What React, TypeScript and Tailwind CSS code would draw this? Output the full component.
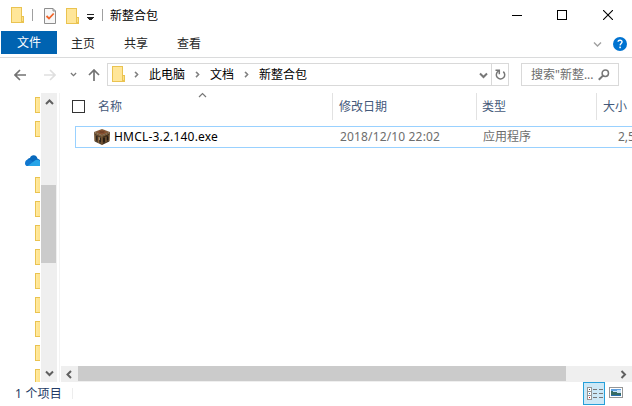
import type { ReactNode } from "react";

function Folder({ className = "" }: { className?: string }) {
  return (
    <svg width="14" height="16" viewBox="0 0 14 16" className={`shrink-0 ${className}`} shapeRendering="crispEdges">
      <path d="M0.5 0.5H10.5V9.5H12.5V15.5H0.5Z" fill="#ffe699" stroke="#eac350" />
      <path d="M10.5 9.5H12.5V14.5L10.5 15.5Z" fill="#fbe08a" stroke="#eac350" />
    </svg>
  );
}

function Chevron({ dir, color = "#606060", w = 2, className = "" }: { dir: "up" | "down" | "left" | "right"; color?: string; w?: number; className?: string }) {
  const d = { up: "M1 6L4.5 2.5L8 6", down: "M1 2.5L4.5 6L8 2.5", left: "M6 1L2.5 4.5L6 8", right: "M2.5 1L6 4.5L2.5 8" }[dir];
  return (
    <svg width="9" height="9" viewBox="0 0 9 9" className={`shrink-0 ${className}`}>
      <path d={d} fill="none" stroke={color} strokeWidth={w} />
    </svg>
  );
}

function Arrow({ color, className = "" }: { color: string; className?: string }) {
  return (
    <svg width="12" height="12" viewBox="0 0 12 12" className={`shrink-0 ${className}`}>
      <path d="M12 6H1.2M6 1L1 6L6 11" fill="none" stroke={color} strokeWidth="1.7" />
    </svg>
  );
}

function Crumb({ children, className = "" }: { children: ReactNode; className?: string }) {
  return <span className={`leading-[21px] text-black ${className}`}>{children}</span>;
}

function TitleBar() {
  return (
    <div className="flex h-[31px] shrink-0 items-start pl-[11px]">
      <Folder className="mt-[7px]" />
      <div className="ml-[7px] mt-[9px] h-[12px] w-px bg-[#a0a0a0]" />
      <svg width="12" height="16" viewBox="0 0 12 16" className="ml-[11px] mt-[8px]">
        <path d="M0.5 0.5H9L11.5 3V15.5H0.5Z" fill="#f7f7f7" stroke="#8e8e8e" />
        <path d="M9 0.5V3H11.5" fill="none" stroke="#8e8e8e" />
        <path d="M2.5 8L5 10.5L9.7 5.5" fill="none" stroke="#f0642a" strokeWidth="1.8" />
      </svg>
      <Folder className="ml-[10px] mt-[8px]" />
      <svg width="7" height="6" viewBox="0 0 7 6" className="ml-[7px] mt-[14px]" shapeRendering="crispEdges">
        <path d="M0 0H7V1H0ZM0 3H7V4H6V5H5V6H2V5H1V4H0Z" fill="#222" />
      </svg>
      <div className="ml-[8px] mt-[9px] h-[12px] w-px bg-[#a0a0a0]" />
      <span className="ml-[7px] mt-[6px] leading-[20px] text-black">新整合包</span>
      <div className="ml-auto mr-[19px] flex">
        <div className="mt-[15px] h-px w-[10px] bg-black" />
        <div className="ml-[35px] mt-[10px] size-[10px] border border-black" />
        <svg width="10" height="10" viewBox="0 0 10 10" className="ml-[36px] mt-[10px]">
          <path d="M0 0L10 10M10 0L0 10" stroke="#000" strokeWidth="1.1" />
        </svg>
      </div>
    </div>
  );
}

function RibbonTabs() {
  return (
    <div className="flex h-[27px] shrink-0 border-b border-[#dadbdc] pl-px leading-[25px] text-[#262626]">
      <div className="h-[23px] w-[56px] bg-[#0063b1] pl-[16px] leading-[23px] text-white">文件</div>
      <span className="ml-[14px]">主页</span>
      <span className="ml-[29px]">共享</span>
      <span className="ml-[29px]">查看</span>
      <div className="ml-auto mr-[5px] flex">
        <Chevron dir="down" color="#a0a0a0" w={1.4} className="mt-[9px]" />
        <svg width="14" height="14" viewBox="0 0 14 14" className="ml-[11px] mt-[6px]">
          <circle cx="7" cy="7" r="7" fill="#0073d1" />
          <path d="M5 4.8C5.2 2.6 9.3 2.8 9 5.1C8.8 6.4 7.2 6.6 7.1 8.4" fill="none" stroke="#fff" strokeWidth="1.4" />
          <rect x="6.3" y="9.6" width="1.6" height="1.6" fill="#fff" />
        </svg>
      </div>
    </div>
  );
}

function AddressRow() {
  return (
    <div className="flex h-[35px] shrink-0 pl-[14px] pt-[5px]">
      <Arrow color="#737373" className="mt-[6px]" />
      <Arrow color="#dfdfdf" className="ml-[18px] mt-[6px] rotate-180" />
      <Chevron dir="down" color="#7a7a7a" w={1.8} className="ml-[13px] mt-[7px] scale-75" />
      <Arrow color="#737373" className="ml-[10px] mt-[6px] rotate-90" />
      <div className="ml-[7px] flex h-[23px] w-[402px] border border-[#d9d9d9]">
        <Folder className="ml-[4px] mt-[2px]" />
        <Chevron dir="right" color="#808080" w={2} className="ml-[6px] mt-[6px] scale-75" />
        <Crumb className="ml-[8px]">此电脑</Crumb>
        <Chevron dir="right" color="#808080" w={2} className="ml-[8px] mt-[6px] scale-75" />
        <Crumb className="ml-[8px]">文档</Crumb>
        <Chevron dir="right" color="#808080" w={2} className="ml-[8px] mt-[6px] scale-75" />
        <Crumb className="ml-[8px]">新整合包</Crumb>
        <Chevron dir="down" color="#777" w={2} className="ml-auto mt-[7px]" />
        <div className="ml-[3px] flex w-[17px] border-l border-[#d9d9d9]">
          <svg width="11" height="12" viewBox="0 0 11 12" className="ml-[3px] mt-[5px]">
            <path d="M3.3 2.2A4.2 4.2 0 1 0 8.3 2.6M0.5 1.3H4.3V5.2" fill="none" stroke="#777" strokeWidth="1.5" />
          </svg>
        </div>
      </div>
      <div className="ml-[12px] flex h-[23px] w-[98px] border border-[#d9d9d9]">
        <span className="ml-[9px] whitespace-nowrap leading-[22px] text-[#6d6d6d]">搜索"新整...</span>
        <svg width="12" height="12" viewBox="0 0 12 12" className="ml-auto mr-[8px] mt-[5px]">
          <circle cx="7.3" cy="4.2" r="3.2" fill="none" stroke="#777" strokeWidth="1.5" />
          <path d="M5 6.6L0.8 10.8" stroke="#777" strokeWidth="2" />
        </svg>
      </div>
    </div>
  );
}

function NavFolder() {
  return (
    <div className="ml-[35px] h-[16px] w-[5px] shrink-0 border border-r-0 border-[#eac350] bg-gradient-to-r from-[#ffeaa3] to-[#ffe287]" />
  );
}

function NavPane() {
  return (
    <div className="flex w-[41px] shrink-0 flex-col gap-[8px] overflow-hidden pt-[4px]">
      <NavFolder />
      <NavFolder />
      <div className="flex h-[24px] w-[40px] shrink-0 items-start overflow-hidden pl-[25px] pt-[10px]">
        <svg width="15" height="12" viewBox="0 0 15 12" className="shrink-0">
          <path d="M2 6.5C2 4.5 3.4 3 5 3C5.5 1 7 0.2 8.7 0.3C11 0.4 12 2 12.4 3.5L15 5V9H3Z" fill="#0869bd" />
          <path d="M0 8.4C0 6 1.6 4.5 3.6 4.6C5 4.6 6 5.4 7 6L9 8L5 11H2.5C1 11 0 9.8 0 8.4Z" fill="#1177cf" />
          <path d="M2.7 11L9.5 5.8C11.2 4.4 13.2 4.6 15 5.8V11Z" fill="#27a4e8" />
        </svg>
      </div>
      <NavFolder />
      <NavFolder />
      <NavFolder />
      <NavFolder />
      <NavFolder />
      <NavFolder />
      <NavFolder />
      <NavFolder />
      <NavFolder />
    </div>
  );
}

function CraftingTable() {
  return (
    <svg width="16" height="16" viewBox="0 0 16 16" className="shrink-0">
      <path d="M0 3L8 0L16 3L8 6.5Z" fill="#80603f" />
      <path d="M0 3L8 6.5V16L0.7 12.5Z" fill="#54412d" />
      <path d="M16 3L8 6.5V16L15.3 12.5Z" fill="#43311e" />
      <path d="M2.5 3L8 0.9L13.5 3L8 5.4Z" fill="#8a5030" />
      <path d="M5.5 2.1L10.5 4.1M10.5 2.1L5.5 4.1" stroke="#603a25" strokeWidth="0.6" />
      <path d="M0.2 4L8 7.4L15.8 4" fill="none" stroke="#8c6840" strokeWidth="1" />
      <path d="M1 6V12M4.5 8V13.9M8 8V15.5M12 8V13.5M15 6V12" stroke="#8b663d" strokeWidth="1" />
      <path d="M2.7 7V11.5M6.3 9V13" stroke="#2b2219" strokeWidth="1.2" />
      <path d="M5.5 8.3V11" stroke="#a99d8a" strokeWidth="0.8" />
      <path d="M10 9V13M13.6 7.5V11" stroke="#211912" strokeWidth="1.5" />
    </svg>
  );
}

function FileList() {
  return (
    <div className="flex min-w-0 flex-1 flex-col">
      <div className="flex h-[27px] shrink-0 pl-[11px] leading-[27px] text-[#44597a]">
        <div className="mt-[7px] size-[13px] shrink-0 border border-[#333]" />
        <span className="ml-[13px] w-[100px] shrink-0">名称</span>
        <Chevron dir="up" color="#777" w={1.2} className="-mt-[2px]" />
        <div className="ml-[125px] w-[144px] shrink-0 border-l border-[#e2e2e2] pl-[6px]">修改日期</div>
        <div className="w-[120px] shrink-0 border-l border-[#e2e2e2] pl-[5px]">类型</div>
        <div className="shrink-0 border-l border-[#e2e2e2] pl-[6px]">大小</div>
      </div>
      <div className="ml-[14px] mt-[6px] flex h-[22px] shrink-0 overflow-hidden border border-r-0 border-[#99d1ff] leading-[20px] text-[#6d6d6d]">
        <div className="flex w-[264px] shrink-0 items-center pl-[18px]">
          <CraftingTable />
          <span className="ml-[4px] whitespace-nowrap text-[12px] tracking-[0.2px] text-black">HMCL-3.2.140.exe</span>
        </div>
        <span className="w-[143px] shrink-0 whitespace-nowrap tracking-[0.15px]">2018/12/10 22:02</span>
        <span className="w-[135px] shrink-0">应用程序</span>
        <span className="shrink-0 whitespace-nowrap">2,5</span>
      </div>
      <div className="mt-auto flex h-[16px] shrink-0 bg-[#efefef]">
        <div className="flex w-[17px] items-center pl-[4px]"><Chevron dir="left" /></div>
        <div className="h-[15px] w-[488px] bg-[#cbcbcb]" />
        <div className="ml-auto mr-[4px] flex items-center"><Chevron dir="right" /></div>
      </div>
    </div>
  );
}

function StatusBar() {
  return (
    <div className="flex h-[24px] shrink-0 pl-[15px]">
      <span className="whitespace-nowrap leading-[23px] tracking-[0.2px] text-[#223a64]">1 个项目</span>
      <div className="ml-[10px] mt-[6px] h-[11px] w-px bg-[#ededed]" />
      <div className="ml-auto mr-[9px] flex">
        <div className="flex h-[23px] w-[22px] border border-[#26a0da] bg-[#cce8f6]">
          <svg width="16" height="13" viewBox="0 0 16 13" className="ml-[3px] mt-[4px]" shapeRendering="crispEdges">
            <path d="M0.5 0.5H4.5V12.5H0.5ZM0.5 4.5H4.5M0.5 8.5H4.5" fill="#fff" stroke="#969696" />
            <rect x="2" y="2" width="1" height="1" fill="#444" />
            <rect x="2" y="6" width="1" height="1" fill="#2187c9" />
            <rect x="2" y="10" width="1" height="1" fill="#c22" />
            <path d="M6 2.5H10M12 2.5H16M6 6.5H10M12 6.5H16M6 10.5H10M12 10.5H16" stroke="#777" />
          </svg>
        </div>
        <svg width="14" height="11" viewBox="0 0 14 11" className="ml-[4px] mt-[5px]" shapeRendering="crispEdges">
          <rect x="0.5" y="0.5" width="13" height="10" fill="#fff" stroke="#969696" />
          <rect x="2" y="2" width="10" height="7" fill="#5e9fdf" />
          <path d="M4 4H8V3H12V6H4Z" fill="#c7e1f5" />
          <path d="M2 4L8 5.5L12 6.5V9H2Z" fill="#366b63" />
          <path d="M2 8H12V9H2Z" fill="#2b70b0" />
        </svg>
      </div>
    </div>
  );
}

export default function App() {
  return (
    <div className="flex h-[406px] w-[632px] flex-col overflow-hidden bg-white font-['Noto_Sans','Noto_Sans_CJK_SC',sans-serif] text-[12px]">
      <TitleBar />
      <RibbonTabs />
      <AddressRow />
      <div className="flex h-[289px] shrink-0">
        <NavPane />
        <div className="flex w-[16px] shrink-0 flex-col items-center bg-[#efefef]">
          <Chevron dir="up" className="mt-[5px]" />
          <div className="mt-[78px] h-[78px] w-[15px] self-start bg-[#cbcbcb]" />
          <Chevron dir="down" className="mb-[4px] mt-auto" />
        </div>
        <div className="ml-[2px] mr-px w-px shrink-0 bg-[#f3f3f3]" />
        <FileList />
      </div>
      <StatusBar />
    </div>
  );
}
